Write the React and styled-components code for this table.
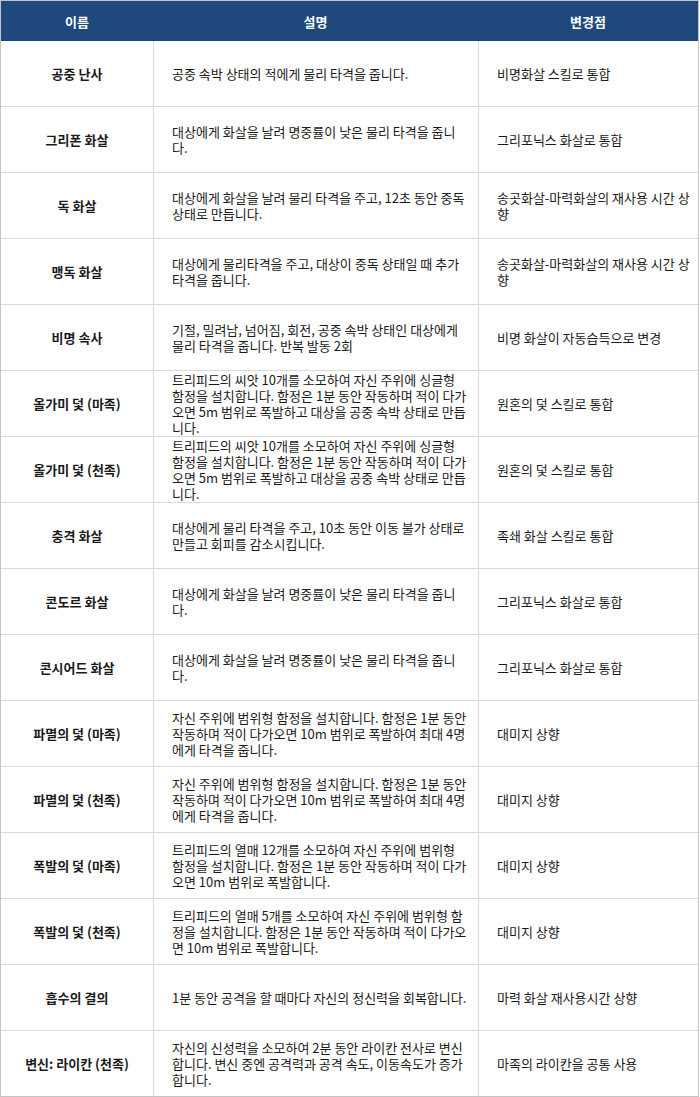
import React from 'react';
import styled, { createGlobalStyle } from 'styled-components';

const GlobalStyle = createGlobalStyle`
  body {
    margin: 0;
    background: #fff;
    font-family: "Noto Sans CJK KR", "Noto Sans", sans-serif;
  }
`;

const Table = styled.div`
  width: 699px;
  border: 1px solid #c4c4c4;
  box-sizing: border-box;
  color: #1a1a1a;
  font-size: 13px;
`;

const Head = styled.div`
  display: grid;
  grid-template-columns: 152px 325px 220px;
  height: 40px;
  background: #1f497c;
  color: #fff;
  font-weight: bold;
`;

const HeadCell = styled.div`
  display: flex;
  align-items: center;
  justify-content: center;
`;

const Row = styled.div`
  display: grid;
  grid-template-columns: 152px 325px 220px;
  height: 66px;
  box-sizing: border-box;
  border-bottom: 1px solid #dadada;
  &:last-child {
    height: 65px;
    border-bottom: none;
  }
`;

const Cell = styled.div`
  display: flex;
  flex-direction: column;
  justify-content: center;
  align-items: ${({ $center }) => ($center ? 'center' : 'flex-start')};
  padding: ${({ $center }) => ($center ? '0' : '0 0 0 18px')};
  font-weight: ${({ $bold }) => ($bold ? 'bold' : 'normal')};
  box-sizing: border-box;
  border-left: ${({ $first }) => ($first ? 'none' : '1px solid #dadada')};
  line-height: 16px;
  overflow: hidden;
`;

const Line = styled.span`
  white-space: nowrap;
`;

const trapDesc = [
  '트리피드의 씨앗 10개를 소모하여 자신 주위에 싱글형',
  '함정을 설치합니다. 함정은 1분 동안 작동하며 적이 다가',
  '오면 5m 범위로 폭발하고 대상을 공중 속박 상태로 만듭',
  '니다.',
];

const doomDesc = [
  '자신 주위에 범위형 함정을 설치합니다. 함정은 1분 동안',
  '작동하며 적이 다가오면 10m 범위로 폭발하여 최대 4명',
  '에게 타격을 줍니다.',
];

const lowHit = ['대상에게 화살을 날려 명중률이 낮은 물리 타격을 줍니', '다.'];
const poisonNote = ['송곳화살-마력화살의 재사용 시간 상', '향'];

const rows = [
  ['공중 난사', ['공중 속박 상태의 적에게 물리 타격을 줍니다.'], ['비명화살 스킬로 통합']],
  ['그리폰 화살', lowHit, ['그리포닉스 화살로 통합']],
  ['독 화살', ['대상에게 화살을 날려 물리 타격을 주고, 12초 동안 중독', '상태로 만듭니다.'], poisonNote],
  ['맹독 화살', ['대상에게 물리타격을 주고, 대상이 중독 상태일 때 추가', '타격을 줍니다.'], poisonNote],
  ['비명 속사', ['기절, 밀려남, 넘어짐, 회전, 공중 속박 상태인 대상에게', '물리 타격을 줍니다. 반복 발동 2회'], ['비명 화살이 자동습득으로 변경']],
  ['올가미 덫 (마족)', trapDesc, ['원혼의 덫 스킬로 통합']],
  ['올가미 덫 (천족)', trapDesc, ['원혼의 덫 스킬로 통합']],
  ['충격 화살', ['대상에게 물리 타격을 주고, 10초 동안 이동 불가 상태로', '만들고 회피를 감소시킵니다.'], ['족쇄 화살 스킬로 통합']],
  ['콘도르 화살', lowHit, ['그리포닉스 화살로 통합']],
  ['콘시어드 화살', lowHit, ['그리포닉스 화살로 통합']],
  ['파멸의 덫 (마족)', doomDesc, ['대미지 상향']],
  ['파멸의 덫 (천족)', doomDesc, ['대미지 상향']],
  ['폭발의 덫 (마족)', ['트리피드의 열매 12개를 소모하여 자신 주위에 범위형', '함정을 설치합니다. 함정은 1분 동안 작동하며 적이 다가', '오면 10m 범위로 폭발합니다.'], ['대미지 상향']],
  ['폭발의 덫 (천족)', ['트리피드의 열매 5개를 소모하여 자신 주위에 범위형 함', '정을 설치합니다. 함정은 1분 동안 작동하며 적이 다가오', '면 10m 범위로 폭발합니다.'], ['대미지 상향']],
  ['흡수의 결의', ['1분 동안 공격을 할 때마다 자신의 정신력을 회복합니다.'], ['마력 화살 재사용시간 상향']],
  ['변신: 라이칸 (천족)', ['자신의 신성력을 소모하여 2분 동안 라이칸 전사로 변신', '합니다. 변신 중엔 공격력과 공격 속도, 이동속도가 증가', '합니다.'], ['마족의 라이칸을 공통 사용']],
];

const Lines = ({ lines }) => lines.map((l, i) => <Line key={i}>{l}</Line>);

export default function App() {
  return (
    <>
      <GlobalStyle />
      <Table>
        <Head>
          <HeadCell>이름</HeadCell>
          <HeadCell>설명</HeadCell>
          <HeadCell>변경점</HeadCell>
        </Head>
        {rows.map(([name, desc, change]) => (
          <Row key={name}>
            <Cell $first $center $bold>{name}</Cell>
            <Cell><Lines lines={desc} /></Cell>
            <Cell><Lines lines={change} /></Cell>
          </Row>
        ))}
      </Table>
    </>
  );
}
